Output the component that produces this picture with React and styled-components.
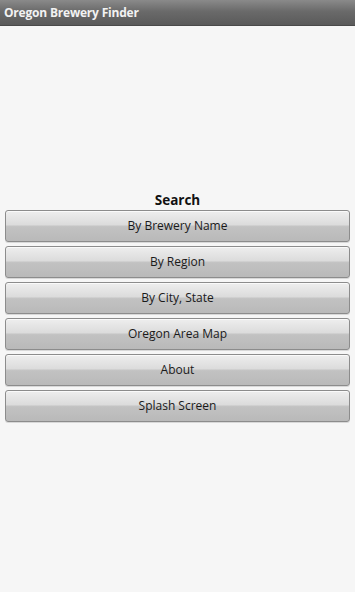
import React from 'react';
import styled, { createGlobalStyle } from 'styled-components';

const GlobalStyle = createGlobalStyle`
  html, body {
    margin: 0;
    padding: 0;
    background: #f6f6f6;
  }
  #root {
    height: 100vh;
  }
`;

const Screen = styled.div`
  display: flex;
  flex-direction: column;
  height: 100vh;
  background: #f6f6f6;
  font-family: 'Open Sans', 'DejaVu Sans', sans-serif;
`;

const TitleBar = styled.div`
  height: 25px;
  flex-shrink: 0;
  display: flex;
  align-items: center;
  padding: 0 4px;
  background: linear-gradient(#8a8a8a, #6a6a6a 45%, #5a5a5a);
  color: #f2f2f2;
  font-weight: 700;
  font-size: 12px;
  letter-spacing: -0.2px;
  border-bottom: 1px solid #4a4a4a;
`;

const Body = styled.div`
  flex: 1;
  display: flex;
  flex-direction: column;
  justify-content: center;
  padding: 0 5px;
  padding-bottom: 6px;
`;

const Heading = styled.div`
  text-align: center;
  font-size: 13.5px;
  font-weight: 700;
  color: #111;
  line-height: 18px;
  margin-bottom: 1px;
`;

const Menu = styled.div`
  display: flex;
  flex-direction: column;
  gap: 4px;
`;

const MenuButton = styled.button`
  height: 32px;
  border: 1px solid #8c8c8c;
  border-radius: 3px;
  background: linear-gradient(
    #eeeeee 0%,
    #dcdcdc 45%,
    #c2c2c2 52%,
    #b9b9b9 100%
  );
  box-shadow: inset 0 1px 0 #fafafa, 0 1px 0 #d8d8d8;
  color: #1a1a1a;
  font-family: inherit;
  font-size: 12px;
  padding: 0;
  cursor: pointer;
`;

const items = [
  'By Brewery Name',
  'By Region',
  'By City, State',
  'Oregon Area Map',
  'About',
  'Splash Screen',
];

export default function App() {
  return (
    <Screen>
      <GlobalStyle />
      <TitleBar>Oregon Brewery Finder</TitleBar>
      <Body>
        <Heading>Search</Heading>
        <Menu>
          {items.map((label) => (
            <MenuButton key={label}>{label}</MenuButton>
          ))}
        </Menu>
      </Body>
    </Screen>
  );
}
